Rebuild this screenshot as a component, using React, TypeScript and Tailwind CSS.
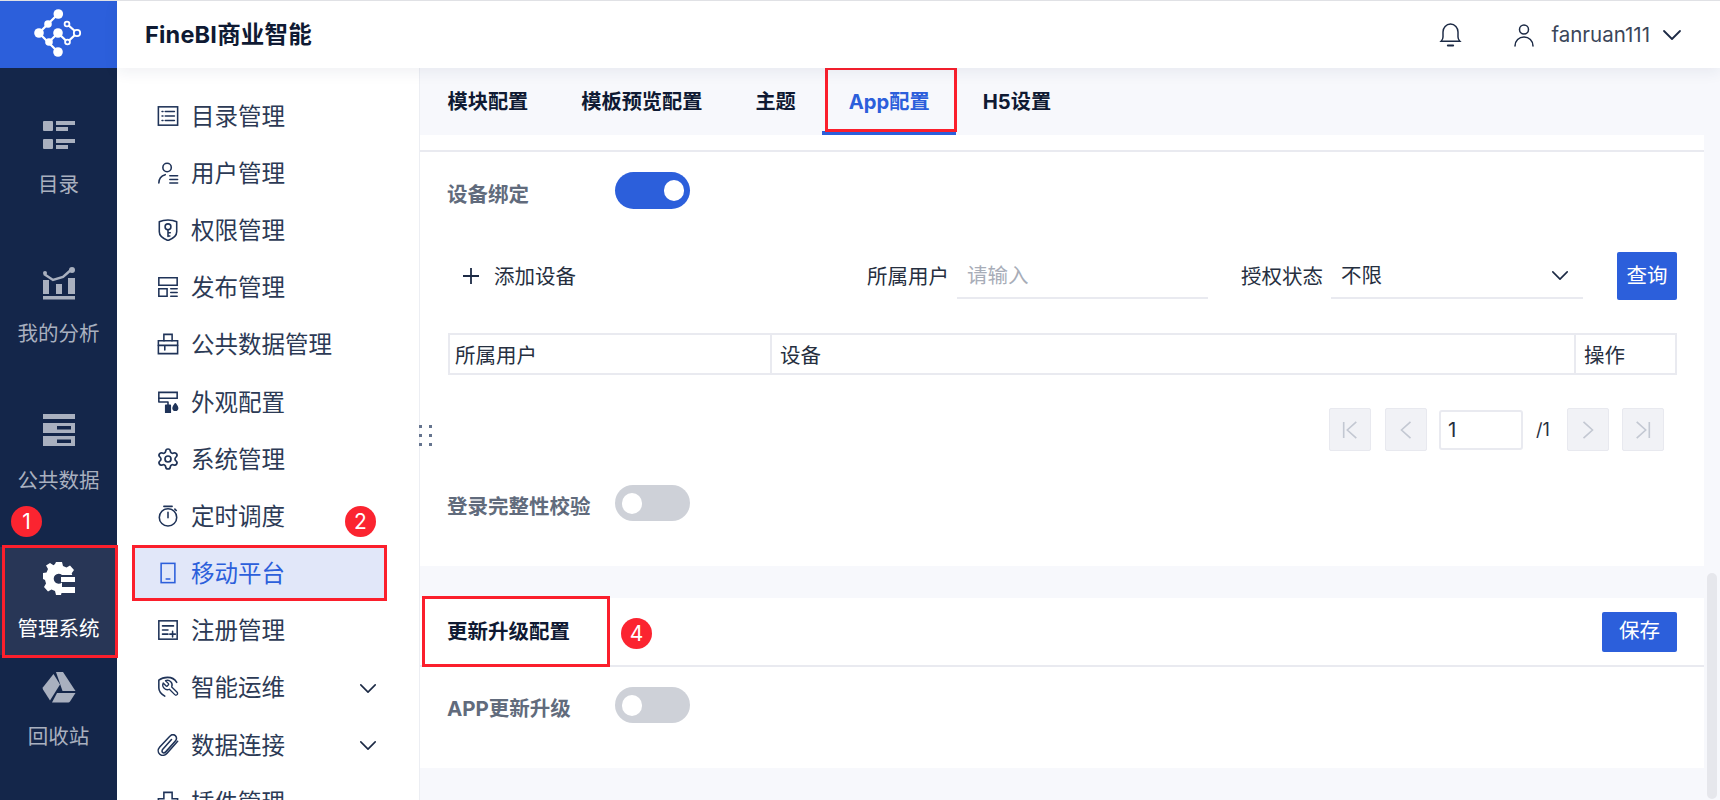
import React from "react";
import { Settings } from "lucide-react";

const S = { fill: "none", stroke: "currentColor", strokeWidth: 1.7, strokeLinecap: "round" as const, strokeLinejoin: "round" as const };

function Ico({ children }: { children: React.ReactNode }) {
  return (
    <svg viewBox="0 0 24 24" className="w-[22px] h-[22px] shrink-0" {...S}>
      {children}
    </svg>
  );
}

const navIcons: Record<string, React.ReactNode> = {
  list: (
    <Ico>
      <rect x="1.500" y="2" width="21" height="20" strokeLinejoin="miter" />
      <path d="M5.500 7h1M9 7h10M5.500 12h1M9 12h10M5.500 17h1M9 17h10" />
    </Ico>
  ),
  user: (
    <Ico>
      <circle cx="11" cy="6" r="4.600" />
      <path d="M2 23c0-4.500 2.500-8 7-9.200" />
      <path d="M14 15h8.500M14 19h8.500M14 23h8.500" />
    </Ico>
  ),
  shield: (
    <Ico>
      <path d="M12 1c3.500 0 7 .7 9.500 2v11c0 4-4 7.500-9.500 9.500C6.500 21.500 2.500 18 2.500 14V3C5 1.700 8.500 1 12 1z" />
      <circle cx="12" cy="8.500" r="3.200" />
      <path d="M12 11.700v7.300M12 15h2.500M12 18.500h2" />
    </Ico>
  ),
  publish: (
    <Ico>
      <path d="M2 10V2h20v8z" strokeLinejoin="miter" />
      <path d="M2 14h9v8H2z" strokeLinejoin="miter" />
      <path d="M15 14h7M15 18h7M15 22h7" />
    </Ico>
  ),
  box: (
    <Ico>
      <path d="M1.500 8.500h6V1.500h9v7h6v14h-21z" strokeLinejoin="miter" />
      <path d="M7.500 8.500h9M1.500 13.500h21M8.500 13.500v5" />
    </Ico>
  ),
  roller: (
    <Ico>
      <path d="M2 8V1.500h20V8z" strokeLinejoin="miter" />
      <path d="M2 8v4h10v4" />
      <rect x="9.500" y="15.500" width="5" height="8" fill="currentColor" />
      <path d="M20 14c-1.500 2-2.500 3.500-2.500 4.500a2.500 2.500 0 0 0 5 0c0-1-1-2.500-2.500-4.500z" fill="currentColor" />
    </Ico>
  ),
  gear: <Settings className="w-[24px] h-[24px] shrink-0 -ml-[1px] -mr-[1px]" strokeWidth={1.7} />,
  timer: (
    <Ico>
      <circle cx="12" cy="13.500" r="9.500" />
      <path d="M7.500 1.500h9M12 8v6M19.500 4.500l1.500 1.500" />
    </Ico>
  ),
  mobile: (
    <Ico>
      <rect x="4.500" y="1.500" width="15" height="21" strokeLinejoin="miter" />
      <path d="M10 18.500h4" />
    </Ico>
  ),
  register: (
    <Ico>
      <rect x="2" y="2" width="20" height="20" strokeLinejoin="miter" />
      <path d="M6 7.500h12M6 12h6M6 16.500h6M14 16.500h6M17 13.500v6" />
    </Ico>
  ),
  wrench: (
    <Ico>
      <path d="M21.500 7C19.500 3.500 15.500 1.500 11.500 1.500 8 1.500 4.500 2.500 2 4.500V13c0 3.500 2.500 6.500 6.500 9" />
      <path
        transform="translate(25 3) scale(-.85 .85)"
        d="M14.700 6.300a1 1 0 0 0 0 1.400l1.600 1.600a1 1 0 0 0 1.400 0l3.770-3.770a6 6 0 0 1-7.940 7.940l-6.910 6.910a2.120 2.120 0 0 1-3-3l6.910-6.910a6 6 0 0 1 7.940-7.940l-3.760 3.760z"
      />
    </Ico>
  ),
  clip: (
    <Ico>
      <path d="M22.500 8 11 21c-2.300 2.600-5.800 3-8 1.100-2.200-1.900-2.200-5.400 0-8L14 2.500c1.700-1.900 4.300-2.200 6-.8 1.700 1.500 1.700 4 0 5.900L9.500 19.500c-1 1.100-2.500 1.400-3.400.6-.9-.8-.8-2.300.2-3.400L15.800 6" />
    </Ico>
  ),
  plugin: (
    <Ico>
      <path d="M1.500 8.500h6V1.500h9v7h6v14h-21z" strokeLinejoin="miter" />
    </Ico>
  ),
};

const navItems = [
  ["list", "目录管理"],
  ["user", "用户管理"],
  ["shield", "权限管理"],
  ["publish", "发布管理"],
  ["box", "公共数据管理"],
  ["roller", "外观配置"],
  ["gear", "系统管理"],
  ["timer", "定时调度"],
  ["mobile", "移动平台", "active"],
  ["register", "注册管理"],
  ["wrench", "智能运维", "more"],
  ["clip", "数据连接", "more"],
  ["plugin", "插件管理"],
];

function Chevron({ className }: { className: string }) {
  return (
    <svg viewBox="0 0 20 12" className={className} fill="none" stroke="currentColor" strokeWidth="1.800" strokeLinecap="round" strokeLinejoin="round">
      <path d="M2 2l8 8 8-8" />
    </svg>
  );
}

const railIcons: Record<string, React.ReactNode> = {
  list: (
    <svg viewBox="0 0 32 29" className="w-[32px] h-[29px]" fill="#a9b0bf">
      <rect x="0" y="0" width="10" height="10" rx="1" />
      <rect x="13" y="0" width="19" height="4" />
      <rect x="13" y="6" width="12" height="4" />
      <rect x="0" y="18" width="10" height="10" rx="1" />
      <rect x="13" y="18" width="19" height="4" />
      <rect x="13" y="24" width="12" height="4" />
    </svg>
  ),
  chart: (
    <svg viewBox="0 0 32 33" className="w-[32px] h-[33px]" fill="#a9b0bf">
      <path d="M1 7l9 6 10-3 9-8" fill="none" stroke="#a9b0bf" strokeWidth="2.500" />
      <circle cx="2" cy="6" r="2" />
      <circle cx="29" cy="3" r="3" />
      <rect x="0" y="13" width="6" height="14" />
      <rect x="13" y="17" width="6" height="10" />
      <rect x="25" y="11" width="7" height="16" />
      <rect x="0" y="29" width="32" height="3.500" />
    </svg>
  ),
  data: (
    <svg viewBox="0 0 32 32" className="w-[32px] h-[32px]">
      <rect x="0" y="0" width="32" height="5" fill="#a9b0bf" />
      <rect x="0" y="9" width="32" height="10" fill="#a9b0bf" />
      <rect x="0" y="22" width="32" height="10" fill="#a9b0bf" />
      <rect x="14" y="12" width="14" height="3.500" fill="#14264a" />
      <rect x="14" y="25.500" width="14" height="3.500" fill="#14264a" />
    </svg>
  ),
  gear: (
    <svg viewBox="0 0 32 33" className="w-[32px] h-[33px]" fill="#fff">
      <path d="M13 0h6l1 4 3.500 1.500L27 3.500l4 4.500-2.300 3.200.5 1.800H19a5 5 0 1 0 0 7.500v5.500l-.5 5-.5 2h-5l-1-4-3.500-1.500L5 29.500 1 25l2-3.500L2 18l-2-1v-6l3.500-.5L5 7 3 3.500 7 1l3.500 2.200L12 2z" />
      <rect x="18" y="15" width="14" height="5" />
      <rect x="18" y="25" width="14" height="6" />
    </svg>
  ),
  drive: (
    <svg viewBox="0 0 34 32" className="w-[34px] h-[32px]" fill="#a9b0bf">
      <path d="M14 1h7l12.500 19H20.500z" />
      <path d="M11.500 3 18 13.500 8 29.500 1 18.500c-.5-.8-.5-1.500 0-2.300z" />
      <path d="M15 22h18.500L28 30.500c-.4.600-1 1-1.700 1H10z" />
    </svg>
  ),
};

const railItems = [
  ["list", "目录", "h-[147.500px]", "h-[29px] mt-[17px]", "mt-[21px]"],
  ["chart", "我的分析", "h-[147.500px]", "h-[33px] mt-[15px]", "mt-[20px]"],
  ["data", "公共数据", "h-[147.500px]", "h-[32px] mt-[15px]", "mt-[21px]"],
  ["gear", "管理系统", "h-[108px] bg-[#283656] text-white", "h-[33px] mt-[15px]", "mt-[20px]"],
  ["drive", "回收站", "h-[108px]", "h-[32px] mt-[16px]", "mt-[20px]"],
];

function Toggle({ on, h }: { on?: boolean; h: string }) {
  return (
    <div className={`w-[75px] ${h} rounded-full flex items-center shrink-0 ${on ? "bg-[#2c5fdb] justify-end pr-[6px]" : "bg-[#ced1d8] pl-[7px]"}`}>
      <div className="w-[20px] h-[21px] rounded-full bg-white" />
    </div>
  );
}

function Pager({ children }: { children: React.ReactNode }) {
  return (
    <div className="w-[42px] h-[43px] bg-[#f1f2f6] border border-[#e8e9ef] rounded-[2px] flex items-center justify-center text-[#c3c8d2]">
      <svg viewBox="0 0 20 24" className="w-[18px] h-[24px]" fill="none" stroke="currentColor" strokeWidth="1.800">
        {children}
      </svg>
    </div>
  );
}

function Badge({ n, className }: { n: number; className: string }) {
  return (
    <div className={`absolute w-[31px] h-[31px] rounded-full bg-[#fb2430] text-white text-[21px] flex items-center justify-center ${className}`}>
      {n}
    </div>
  );
}

export default function App() {
  return (
    <div className="relative w-[1720px] h-[800px] overflow-hidden flex border-t border-[#e0e1e5] bg-white font-['Inter','Noto_Sans_CJK_SC',sans-serif]">
      {/* left rail */}
      <aside className="w-[117px] shrink-0 bg-[#14264a] flex flex-col">
        <div className="h-[67px] bg-[#2c5fdb] flex items-center justify-center">
          <svg viewBox="0 0 70 60" className="w-[70px] h-[60px] -mt-[1px] ml-[3px]" fill="#fff" stroke="#fff">
            <path d="M33 10 14 29 33 48M24 38l9-9 9.500 9 9.500-9-10-9" fill="none" strokeWidth="2.200" />
            <g stroke="none">
              <circle cx="33.300" cy="10" r="4.800" />
              <circle cx="23" cy="20" r="3.800" />
              <circle cx="14" cy="29" r="4.800" />
              <circle cx="33" cy="29" r="4.800" />
              <circle cx="24" cy="38" r="3.800" />
              <circle cx="33" cy="48" r="4.800" />
            </g>
            <g fill="#2c5fdb" strokeWidth="1.800">
              <circle cx="42" cy="20" r="2.400" />
              <circle cx="52" cy="29" r="3.200" />
              <circle cx="42.500" cy="38" r="2.400" />
            </g>
          </svg>
        </div>
        <div className="pt-[36px] flex flex-col">
          {railItems.map(([ic, label, box, slot, gap]) => (
            <div key={label} className={`flex flex-col items-center text-[#a9b0bf] text-[20.500px] ${box}`}>
              <div className={`flex items-center ${slot}`}>{railIcons[ic]}</div>
              <div className={`h-[28px] leading-[28px] whitespace-nowrap ${gap}`}>{label}</div>
            </div>
          ))}
        </div>
      </aside>

      <div className="flex-1 min-w-0 flex flex-col">
        {/* header */}
        <header className="relative z-10 h-[67px] shrink-0 bg-white flex items-center pl-[28px] pr-[38px] shadow-[0_4px_14px_rgba(30,40,80,0.07)]">
          <div className="text-[23.500px] font-bold text-[#0f1a33] leading-[67px] tracking-[0.2px]">FineBI商业智能</div>
          <div className="ml-auto flex items-center text-[#1c2a45]">
            <svg viewBox="0 0 24 24" className="w-[25px] h-[25px] mr-[49px]" fill="none" stroke="currentColor" strokeWidth="1.400" strokeLinecap="round">
              <path d="M3 18.500h18c-1-1-1.800-2.200-1.800-4V9.500c0-4-3-7.500-7.200-7.500S4.800 5.500 4.800 9.500v5c0 1.800-.8 3-1.800 4z" />
              <path d="M9.500 22.500h5" strokeWidth="2" />
            </svg>
            <svg viewBox="0 0 24 24" className="w-[24px] h-[24px] mr-[15px]" fill="none" stroke="currentColor" strokeWidth="1.500" strokeLinecap="round">
              <circle cx="12" cy="6.500" r="4.500" />
              <path d="M3 23c0-5.500 4-9 9-9s9 3.500 9 9" />
            </svg>
            <span className="text-[20.500px] text-[#3b4659] leading-[24px]">fanruan111</span>
            <Chevron className="w-[20px] h-[12px] ml-[12px] text-[#1c2a45]" />
          </div>
        </header>

        <div className="flex-1 min-h-0 flex">
          {/* second nav */}
          <nav className="w-[303px] shrink-0 bg-white pt-[19px] border-r border-[#eceef3]">
            {navItems.map(([ic, label, kind]) => (
              <div key={label} className="h-[57.200px] flex items-center pl-[16px] pr-[33px]">
                <div className={`w-[253px] h-[52px] flex items-center pl-[24px] pr-[9px] ${kind === "active" ? "bg-[#e1e7f9] text-[#2c5fdb]" : "text-[#1f3358]"}`}>
                  {navIcons[ic]}
                  <span className={`ml-[12px] pt-[2px] text-[23.500px] leading-[30px] whitespace-nowrap ${kind === "active" ? "text-[#2c5fdb]" : "text-[#2c3a55]"}`}>{label}</span>
                  {kind === "more" && <Chevron className="ml-auto mt-[2px] w-[18px] h-[11px] text-[#1c2a45]" />}
                </div>
              </div>
            ))}
          </nav>

          {/* content */}
          <main className="flex-1 min-w-0 bg-[#f7f8fc] pr-[16px] flex flex-col">
            <div className="h-[67px] shrink-0 flex items-stretch pl-[1px] text-[20.200px] font-bold text-[#0f1a33]">
              {["模块配置", "模板预览配置", "主题", "App配置", "H5设置"].map((t) => (
                <div key={t} className={`px-[26.500px] flex items-center pt-[5px] border-b-4 ${t === "App配置" ? "border-[#2c5fdb] text-[#2c5fdb]" : "border-transparent"}`}>
                  {t}
                </div>
              ))}
            </div>

            <section className="h-[431px] shrink-0 bg-white flex flex-col text-[20.500px] text-[#262f3f]">
              <div className="h-[17px] border-b-2 border-[#e9eaf0] shrink-0" />
              <div className="mt-[20px] pl-[27px] flex items-center">
                <div className="w-[168px] pt-[9px] font-bold text-[#616b7c] leading-[28px]">设备绑定</div>
                <Toggle on h="h-[37px]" />
              </div>

              <div className="mt-[43px] pl-[28px] pr-[27px] h-[48px] flex items-center">
                <svg viewBox="0 0 18 18" className="w-[18px] h-[18px] ml-[14px]" fill="none" stroke="#1c2a45" strokeWidth="1.800">
                  <path d="M9 1v16M1 9h16" />
                </svg>
                <span className="ml-[14px] pt-[2px]">添加设备</span>
                <span className="ml-auto pt-[2px]">所属用户</span>
                <div className="ml-[8px] w-[251px] h-[46px] border-b-2 border-[#e9eaf0] pl-[10px] pt-[2px] flex items-center text-[#a8adb8]">请输入</div>
                <span className="ml-[33px] pt-[2px]">授权状态</span>
                <div className="ml-[8px] w-[252px] h-[46px] border-b-2 border-[#e9eaf0] pl-[10px] pr-[14px] flex items-center justify-between">
                  <span className="pt-[2px]">不限</span>
                  <Chevron className="w-[18px] h-[11px] text-[#1c2a45]" />
                </div>
                <div className="ml-[34px] w-[60px] h-[48px] rounded-[2px] bg-[#2c5fdb] text-white flex items-center justify-center">查询</div>
              </div>

              <div className="mt-[33px] ml-[28px] mr-[27px] h-[42px] border-2 border-[#e9eaf0] flex items-center leading-[28px]">
                <div className="w-[322px] h-full pl-[5px] pt-[4px] flex items-center border-r-2 border-[#e9eaf0]">所属用户</div>
                <div className="flex-1 h-full pl-[8px] pt-[4px] flex items-center">设备</div>
                <div className="w-[101px] h-full pl-[8px] pt-[4px] flex items-center border-l-2 border-[#e9eaf0]">操作</div>
              </div>

              <div className="mt-[33px] pr-[40px] flex justify-end items-center">
                <Pager>
                  <path d="M3 3v18M17 3 7 12l10 9" />
                </Pager>
                <div className="ml-[14px]">
                  <Pager>
                    <path d="M15 3 5 12l10 9" />
                  </Pager>
                </div>
                <div className="ml-[12px] w-[84px] h-[40px] border-2 border-[#e9eaf0] rounded-[3px] flex items-center pl-[7px] pt-[2px]">1</div>
                <div className="ml-[13px] w-[30px] text-[18px]">/1</div>
                <div className="ml-[1px]">
                  <Pager>
                    <path d="M5 3l10 9-10 9" />
                  </Pager>
                </div>
                <div className="ml-[13px]">
                  <Pager>
                    <path d="M3 3l10 9-10 9M17 3v18" />
                  </Pager>
                </div>
              </div>

              <div className="mt-[34px] pl-[27px] flex items-center">
                <div className="w-[168px] pt-[7px] font-bold text-[#616b7c] leading-[28px]">登录完整性校验</div>
                <Toggle h="h-[36px]" />
              </div>
            </section>

            <section className="mt-[32px] h-[170px] shrink-0 bg-white flex flex-col text-[20.500px]">
              <div className="h-[69px] border-b-2 border-[#e9eaf0] pl-[27px] pr-[27px] flex items-center">
                <span className="font-bold text-[#0f1a33] pt-[2px]">更新升级配置</span>
                <div className="ml-auto w-[75px] h-[40px] rounded-[2px] bg-[#2c5fdb] text-white flex items-center justify-center">保存</div>
              </div>
              <div className="mt-[20px] pl-[27px] flex items-center">
                <div className="w-[168px] pt-[7px] font-bold text-[#616b7c] leading-[28px]">APP更新升级</div>
                <Toggle h="h-[36px]" />
              </div>
            </section>
          </main>
        </div>
      </div>

      {/* overlays */}
      <div className="absolute left-[1707px] top-[572px] w-[10px] h-[226px] rounded-full bg-[#e6e7ec]" />
      <div className="absolute left-[419px] top-[424px] w-[12px] grid grid-cols-2 gap-x-[7px] gap-y-[6px]">
        {[0, 1, 2, 3, 4, 5].map((i) => (
          <div key={i} className="w-[3px] h-[3px] bg-[#66758f]" />
        ))}
      </div>

      <div className="absolute left-[2px] top-[544px] w-[116px] h-[113px] border-[3px] border-[#fb1f2c]" />
      <div className="absolute left-[132px] top-[544px] w-[255px] h-[56px] border-[3px] border-[#fb1f2c]" />
      <div className="absolute left-[825px] top-[66px] w-[132px] h-[65px] border-[3px] border-[#fb1f2c]" />
      <div className="absolute left-[422px] top-[595px] w-[188px] h-[71px] border-[3px] border-[#fb1f2c]" />
      <Badge n={1} className="left-[11px] top-[505px]" />
      <Badge n={2} className="left-[345px] top-[505px]" />
      <Badge n={3} className="left-[825px] top-[28px]" />
      <Badge n={4} className="left-[621px] top-[617px]" />
    </div>
  );
}
